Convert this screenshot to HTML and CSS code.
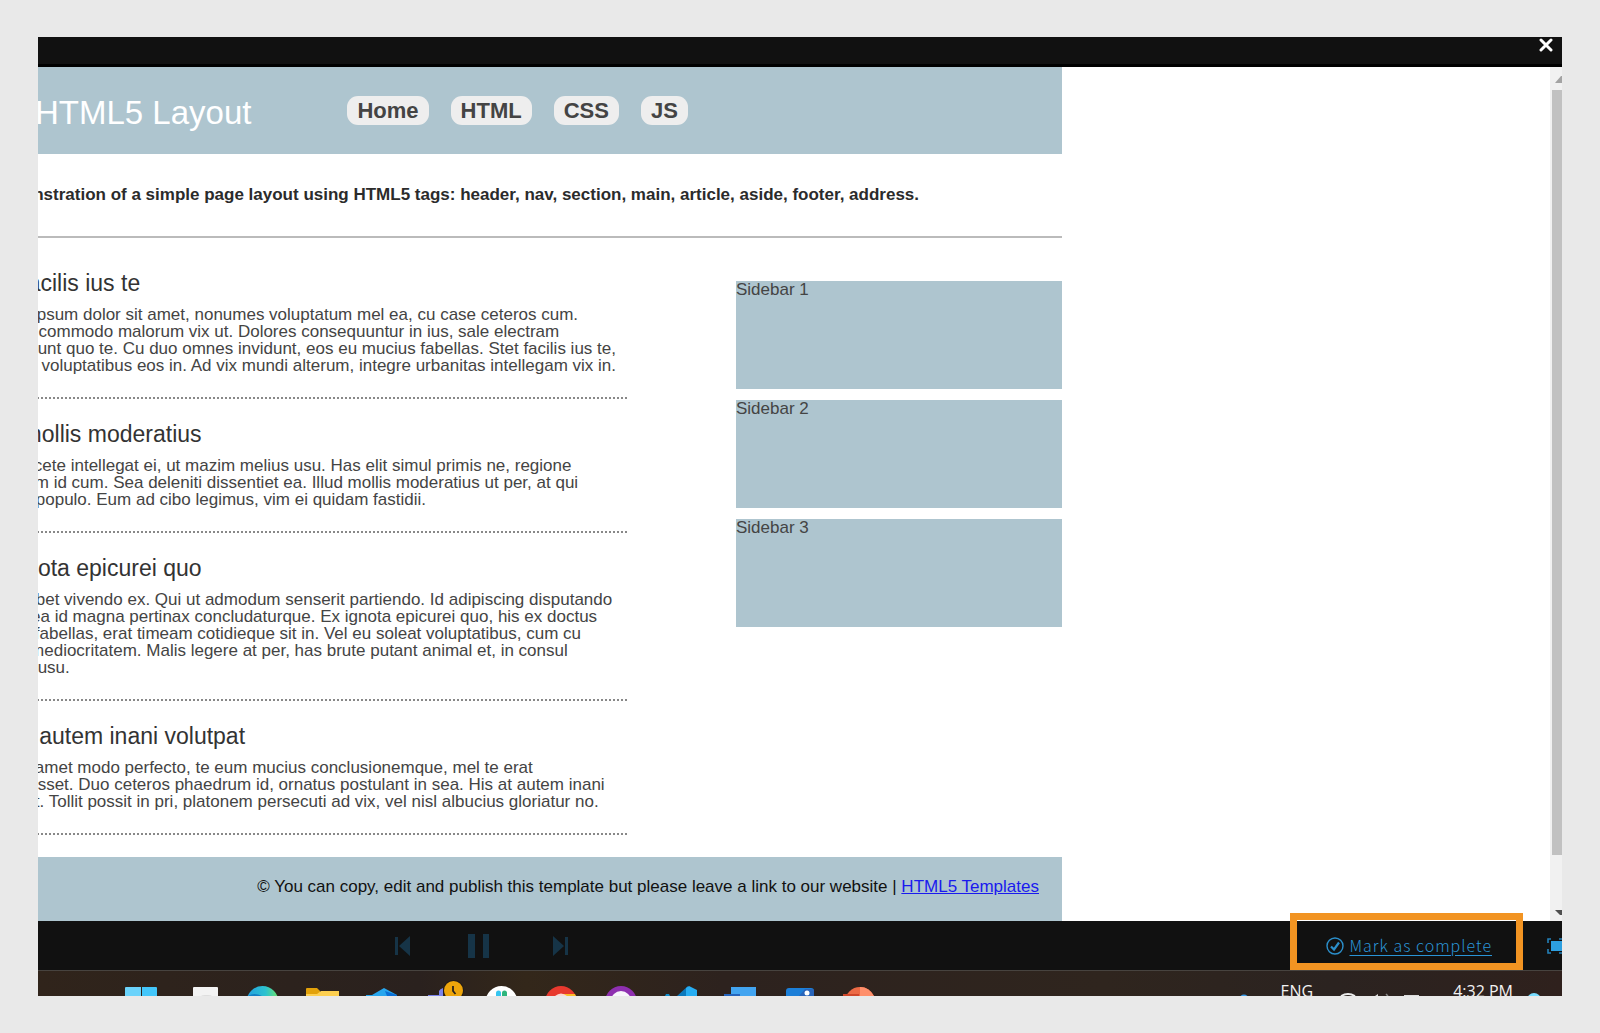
FILE: index.html
```html
<!DOCTYPE html>
<html lang="en">
<head>
<meta charset="utf-8">
<title>HTML5 Layout</title>
<link rel="stylesheet" href="styles.css">
</head>
<body>
<div class="screen">
  <div class="topbar">
    <button class="close" aria-label="Close"><svg width="14" height="16" viewBox="0 0 14 16"><path d="M2 3L12 13M12 3L2 13" stroke="#fff" stroke-width="3" stroke-linecap="round"/></svg></button>
  </div>

  <div class="viewer">
    <div class="site">
      <header class="site-header">
        <h1>HTML5 Layout</h1>
        <nav>
          <a href="#home">Home</a>
          <a href="#html">HTML</a>
          <a href="#css">CSS</a>
          <a href="#js">JS</a>
        </nav>
      </header>
      <section class="intro">
        <strong>Demonstration of a simple page layout using HTML5 tags: header, nav, section, main, article, aside, footer, address.</strong>
      </section>
      <div class="columns">
        <main>
          <article>
            <h2>Stet facilis ius te</h2>
            <p>Lorem ipsum dolor sit amet, nonumes voluptatum mel ea, cu case ceteros cum.<br>Novum commodo malorum vix ut. Dolores consequuntur in ius, sale electram<br>dissentiunt quo te. Cu duo omnes invidunt, eos eu mucius fabellas. Stet facilis ius te,<br>quando voluptatibus eos in. Ad vix mundi alterum, integre urbanitas intellegam vix in.</p>
          </article>
          <article>
            <h2>Illud mollis moderatius</h2>
            <p>Eum facete intellegat ei, ut mazim melius usu. Has elit simul primis ne, regione<br>minimum id cum. Sea deleniti dissentiet ea. Illud mollis moderatius ut per, at qui<br>ubique populo. Eum ad cibo legimus, vim ei quidam fastidii.</p>
          </article>
          <article>
            <h2>Ex ignota epicurei quo</h2>
            <p>Quo debet vivendo ex. Qui ut admodum senserit partiendo. Id adipiscing disputando<br>eam, sea id magna pertinax concludaturque. Ex ignota epicurei quo, his ex doctus<br>delenit fabellas, erat timeam cotidieque sit in. Vel eu soleat voluptatibus, cum cu<br>exerci mediocritatem. Malis legere at per, has brute putant animal et, in consul<br>utamur usu.</p>
          </article>
          <article>
            <h2>His at autem inani volutpat</h2>
            <p>Te has amet modo perfecto, te eum mucius conclusionemque, mel te erat<br>deterruisset. Duo ceteros phaedrum id, ornatus postulant in sea. His at autem inani<br>volutpat. Tollit possit in pri, platonem persecuti ad vix, vel nisl albucius gloriatur no.</p>
          </article>
        </main>
        <aside>
          <div class="box">Sidebar 1</div>
          <div class="box">Sidebar 2</div>
          <div class="box">Sidebar 3</div>
        </aside>
      </div>
      <footer class="site-footer">© You can copy, edit and publish this template but please leave a link to our website | <a href="#templates">HTML5 Templates</a></footer>
    </div>
    <div class="scrollbar">
      <svg class="arrow" width="12" height="23" viewBox="0 0 12 23"><path d="M5 16L11 9L12 9V16Z" fill="#a3a3a3"/></svg>
      <div class="thumb"></div>
      <svg class="arrow" width="12" height="12" viewBox="0 0 12 12"><path d="M5 1H12V6H10Z" fill="#505050"/></svg>
    </div>
  </div>

  <div class="player">
    <div class="controls">
      <button aria-label="Previous"><svg width="16" height="20" viewBox="0 0 16 20"><path d="M0 1H3V19H0ZM15 0V20L4 10Z"/></svg></button>
      <button aria-label="Pause"><svg width="28" height="26" viewBox="0 0 28 26"><path d="M0 1H7V25H0ZM15 1H21V25H15Z"/></svg></button>
      <button aria-label="Next"><svg width="16" height="20" viewBox="0 0 16 20"><path d="M12 1H15V19H12ZM0 0V20L11 10Z"/></svg></button>
    </div>
    <div class="actions">
      <svg width="18" height="18" viewBox="0 0 18 18" fill="none" stroke="#2b8fcb"><circle cx="9" cy="9" r="8" stroke-width="1.4"/><path d="M5 9.5L8 12.5L13 5.5" stroke-width="2.2"/></svg>
      <a href="#complete">Mark as complete</a>
      <button class="full" aria-label="Full screen"><svg width="15" height="16" viewBox="0 0 15 16"><path d="M4 3H15V13H4Z" fill="#2d9fe0"/><path d="M4 1H1V5M1 11V15H4M12 1H15M12 15H15" fill="none" stroke="#2380b8" stroke-width="1.6"/></svg></button>
    </div>
    <div class="highlight"></div>
  </div>

  <div class="taskbar">
    <div class="apps">
      <svg viewBox="0 0 60 25"><path d="M14 17q0-1 1-1H30V25H14Z" fill="#6bd3fb"/><path d="M31 16H45q1 0 1 1V25H31Z" fill="#43c6fa"/></svg>
      <svg viewBox="0 0 60 25"><path d="M22 17q0-1 1-1H46q1 0 1 1V25H22Z" fill="#f3f3f3"/><path d="M30 25q1-1 4-1h3q3 0 4 1Z" fill="#dedede"/></svg>
      <svg viewBox="0 0 60 25"><defs><linearGradient id="edge"><stop offset="0" stop-color="#229fe0"/><stop offset=".6" stop-color="#2cc2cf"/><stop offset="1" stop-color="#6de36b"/></linearGradient></defs><circle cx="31.500" cy="31" r="16" fill="url(#edge)"/><path d="M17 25q6-4 14 0Z" fill="#137fc4"/></svg>
      <svg viewBox="0 0 60 25"><path d="M15 25V18q0-1 1-1H26l3 3V25Z" fill="#e2a10a"/><path d="M15 25V23H26L30 20H48V25Z" fill="#fdcf50"/></svg>
      <svg viewBox="0 0 60 25"><path d="M15 25V24H21L33 17L46 24V25Z" fill="#27a6ee"/><path d="M34 20L46 24V25H36Z" fill="#0b6fd6"/></svg>
      <svg viewBox="0 0 60 25"><path d="M17 24H29V25H17ZM28 20q1-2 4-3V25H28Z" fill="#7b83eb"/><circle cx="42.500" cy="19.500" r="10.500" fill="#211b17"/><circle cx="42.500" cy="19.500" r="9.500" fill="#eda50b"/><path d="M42 15V20L44.500 23" fill="none" stroke="#29221a" stroke-width="1.800"/></svg>
      <svg viewBox="0 0 60 25"><circle cx="30.500" cy="31" r="16" fill="#fff"/><path d="M25 25V22a2 2 0 0 1 5 0V25Z" fill="#36c5f0"/><path d="M31 25V22a2 2 0 0 1 5 0V25Z" fill="#2eb67d"/></svg>
      <svg viewBox="0 0 60 25"><circle cx="30" cy="31" r="16" fill="#e8392e"/><path d="M32 23H44L45 25H32Z" fill="#fbbc2a"/><path d="M24 25q6-5 12 0Z" fill="#fbd9d4"/></svg>
      <svg viewBox="0 0 60 25"><circle cx="30" cy="31" r="16" fill="#8e2fb0"/><circle cx="30" cy="30" r="10" fill="#f7f4fb"/></svg>
      <svg viewBox="0 0 60 25"><path d="M14 25l1-2h3l1 2Z" fill="#118fce"/><path d="M26 25L37 15V25Z" fill="#0b79bd"/><path d="M35 25V17L38 15L46 19V25Z" fill="#27adf2"/></svg>
      <svg viewBox="0 0 60 25"><path d="M20 16H45V25H20Z" fill="#42a4f0"/><path d="M13 25V23H29V25Z" fill="#2464bd"/></svg>
      <svg viewBox="0 0 60 25"><path d="M15 25V20q0-3 3-3H40q3 0 3 3V25Z" fill="#1c7fd8"/><path d="M28 25L34 18H40q3 0 3 2V25Z" fill="#2864ba"/><circle cx="36" cy="22" r="2.500" fill="#fff"/></svg>
      <svg viewBox="0 0 60 25"><circle cx="29" cy="31" r="15" fill="#ec6a45"/><path d="M29 16a15 15 0 0 1 14 9H29Z" fill="#ff8f6b"/><path d="M12 23H28V25H12Z" fill="#d0472a"/></svg>
    </div>
    <div class="tray">
      <svg width="10" height="25" viewBox="0 0 10 25"><circle cx="5" cy="28" r="4.500" fill="#3a9be8"/></svg>
      <span class="language">ENG</span>
      <svg width="84" height="25" viewBox="0 0 84 25"><path d="M4 25q7-4 14 0" fill="none" stroke="#eee" stroke-width="2"/><path d="M38 25l3-2v2Z" fill="#ddd"/><path d="M49 23l2 2" stroke="#888" stroke-width="1.500"/><path d="M67 24.500H82" stroke="#ddd"/></svg>
      <span class="clock">4:32 PM</span>
      <svg width="14" height="25" viewBox="0 0 14 25"><circle cx="7" cy="29" r="7" fill="#78dcff"/></svg>
    </div>
  </div>
</div>
</body>
</html>
```
FILE: styles.css
```css
* { box-sizing: border-box; }

body {
  margin: 0;
  min-height: 100vh;
  padding: 37px 38px;
  background: #e9e9e9;
  font-family: "Liberation Sans", Arial, sans-serif;
  font-size: 17px;
  line-height: 17px;
  color: #444;
}

button {
  display: flex;
  padding: 0;
  border: 0;
  background: none;
}

.screen { overflow: hidden; }

.topbar {
  display: flex;
  justify-content: flex-end;
  height: 30px;
  padding-right: 9px;
  background: #111;
  border-bottom: 3px solid #000;
}

.viewer {
  display: flex;
  justify-content: space-between;
  overflow: hidden;
  background: #fff;
}

.site {
  flex: none;
  width: 1092px;
  margin-left: -68px;
  white-space: nowrap;
}

.site-header {
  display: flex;
  align-items: flex-start;
  height: 87px;
  padding-left: 65px;
  background: #aec5cf;
}

h1 {
  margin: 28px 96px 0 0;
  font-size: 33px;
  line-height: 36px;
  font-weight: 400;
  color: #fff;
}

nav {
  display: flex;
  gap: 22px;
  margin-top: 29px;
}

nav a {
  padding: 0 10px;
  border-radius: 11px;
  background: #eee;
  font-size: 22px;
  line-height: 29px;
  font-weight: 700;
  color: #444;
  text-decoration: none;
}

.intro {
  height: 84px;
  padding: 32px 0 0 16px;
  border-bottom: 2px solid #bbb;
  color: #2b2b2b;
}

.columns {
  display: flex;
  justify-content: space-between;
  height: 619px;
}

main { width: 657px; }

article {
  padding: 33px 0 23px 4px;
  border-bottom: 2px dotted #888;
}

article + article { padding-top: 23px; }

h2 {
  margin: 0 0 11px;
  font-size: 23px;
  line-height: 24px;
  font-weight: 400;
  color: #333;
}

p { margin: 0 0 0 6px; }

aside {
  display: flex;
  flex-direction: column;
  gap: 11px;
  width: 326px;
  padding-top: 43px;
}

.box {
  height: 108px;
  background: #aec5cf;
}

.site-footer {
  height: 64px;
  padding: 21px 23px 0 0;
  background: #aec5cf;
  color: #111;
  text-align: right;
}

.site-footer a { color: #1a1aee; }

.scrollbar {
  display: flex;
  flex-direction: column;
  width: 12px;
  background: #f1f1f1;
}

.arrow { flex: none; }

.thumb {
  flex: 1;
  margin: 0 0 54px 2px;
  background: #c1c1c1;
}

.player {
  position: relative;
  display: flex;
  justify-content: space-between;
  align-items: center;
  height: 49px;
  background: #111;
}

.controls {
  display: flex;
  align-items: center;
  gap: 57px;
  padding-left: 357px;
  fill: #163447;
}

.actions {
  display: flex;
  align-items: center;
  gap: 6px;
}

.actions a {
  padding-bottom: 2px;
  font-family: "Noto Sans CJK SC", sans-serif;
  font-size: 16px;
  line-height: 24px;
  font-weight: 300;
  letter-spacing: 1px;
  color: #2a94d6;
  text-underline-offset: 3px;
}

.full { margin-left: 49px; }

.highlight {
  position: absolute;
  top: -8px;
  right: 39px;
  width: 233px;
  height: 57px;
  border: 7px solid #f29422;
}

.taskbar {
  display: flex;
  justify-content: space-between;
  height: 26px;
  overflow: hidden;
  border-top: 1px solid #47433f;
  background: linear-gradient(90deg, #30241b, #2a211e 25%, #33271a 32%, #2d221e 45%, #2f251e 70%, #2b2320 85%, #2f211d);
}

.apps {
  display: flex;
  padding-left: 73px;
}

.apps svg {
  width: 60px;
  height: 25px;
}

.tray {
  display: flex;
  padding-right: 21px;
  font-family: "Open Sans", "Noto Sans", sans-serif;
  font-size: 16px;
  line-height: 24px;
  color: #f2f2f2;
}

.tray span { padding-top: 8px; }
.language { margin: 0 24px 0 32px; }
.clock { margin: 0 14px 0 32px; }
```
